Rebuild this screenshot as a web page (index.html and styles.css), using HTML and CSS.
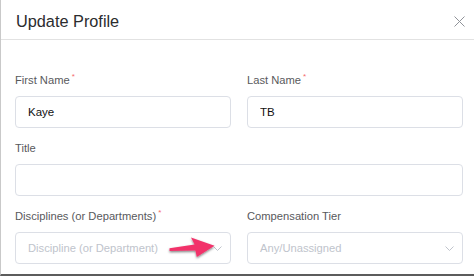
FILE: index.html
```html
<!DOCTYPE html>
<html lang="en">
<head>
    <meta charset="UTF-8">
    <meta name="viewport" content="width=device-width, initial-scale=1.0">
    <title>Update Profile</title>
    <link rel="stylesheet" href="styles.css">
</head>
<body>
    <div class="modal">
        <header class="modal-header">
            <span class="modal-title">Update Profile</span>
            <svg class="close" width="11" height="11" viewBox="0 0 11 11">
                <path d="M0.5 0.5 L10.5 10.5 M10.5 0.5 L0.5 10.5" stroke="#909399" stroke-width="1" fill="none"/>
            </svg>
        </header>
        <form class="form">
            <div class="field">
                <label>First Name<span class="req">*</span></label>
                <input class="input" type="text" value="Kaye">
            </div>
            <div class="field">
                <label>Last Name<span class="req">*</span></label>
                <input class="input" type="text" value="TB">
            </div>
            <div class="field wide">
                <label>Title</label>
                <input class="input" type="text">
            </div>
            <div class="field">
                <label>Disciplines (or Departments)<span class="req">*</span></label>
                <div class="select">
                    <span class="placeholder">Discipline (or Department)</span>
                    <svg width="9" height="5" viewBox="0 0 9 5">
                        <path d="M0.5 0.5 L4.5 4.5 L8.5 0.5" stroke="#c0c4cc" fill="none"/>
                    </svg>
                </div>
            </div>
            <div class="field">
                <label>Compensation Tier</label>
                <div class="select">
                    <span class="placeholder">Any/Unassigned</span>
                    <svg width="9" height="5" viewBox="0 0 9 5">
                        <path d="M0.5 0.5 L4.5 4.5 L8.5 0.5" stroke="#c0c4cc" fill="none"/>
                    </svg>
                </div>
            </div>
        </form>
    </div>

    <!-- annotation arrow over the discipline select -->
    <svg class="arrow" width="56" height="32" viewBox="165 231 56 32">
        <defs>
            <filter id="shadow" x="-20%" y="-30%" width="140%" height="170%">
                <feDropShadow dx="0" dy="1.3" stdDeviation="1.1" flood-color="#000" flood-opacity="0.5"/>
            </filter>
        </defs>
        <polygon filter="url(#shadow)" fill="#f2336b"
            points="169.5,248.2 194.6,244.6 191,237.6 214.5,245.8 196.8,257 195.4,250.6 169.5,251"/>
    </svg>
</body>
</html>
```

FILE: styles.css
```css
body {
    margin: 0;
    font-family: 'Liberation Sans', Arial, sans-serif;
    background: #fff;
    position: relative;
    width: 474px;
    height: 277px;
    overflow: hidden;
}

.modal {
    box-sizing: border-box;
    width: 474px;
    border-left: 1px solid #c9c9c9;
    border-bottom: 2px solid #5c5c5c;
    background: #fff;
}

.modal-header {
    display: flex;
    justify-content: space-between;
    align-items: center;
    padding: 11px 9px 8px 15px;
    border-bottom: 1px solid #e2e2e2;
}

.modal-title {
    font-size: 16.3px;
    line-height: 20px;
    color: #2b2c2e;
}

.close {
    display: block;
}

.form {
    display: grid;
    grid-template-columns: 216px 216px;
    column-gap: 16px;
    row-gap: 12px;
    padding: 32px 11px 10px 14px;
}

.field {
    display: flex;
    flex-direction: column;
}

.field.wide {
    grid-column: 1 / 3;
}

label {
    font-size: 11.2px;
    line-height: 16px;
    height: 16px;
    color: #58595c;
    margin-bottom: 8px;
}

.req {
    color: #f56c6c;
    font-size: 8px;
    vertical-align: 5px;
    line-height: 0;
    margin-left: 2px;
}

.input, .select {
    box-sizing: border-box;
    height: 32px;
    width: 100%;
    border: 1px solid #dcdfe6;
    border-radius: 4px;
    background: #fff;
}

.input {
    margin: 0;
    padding: 0 12px;
    font-family: 'Liberation Sans', Arial, sans-serif;
    font-size: 11.5px;
    color: #111;
    outline: none;
}

.select {
    display: flex;
    align-items: center;
    justify-content: space-between;
    padding: 0 8px 0 12px;
}

.placeholder {
    font-size: 11.2px;
    color: #c0c4cc;
}

.select svg {
    display: block;
}

.arrow {
    position: absolute;
    left: 165px;
    top: 231px;
}
```
